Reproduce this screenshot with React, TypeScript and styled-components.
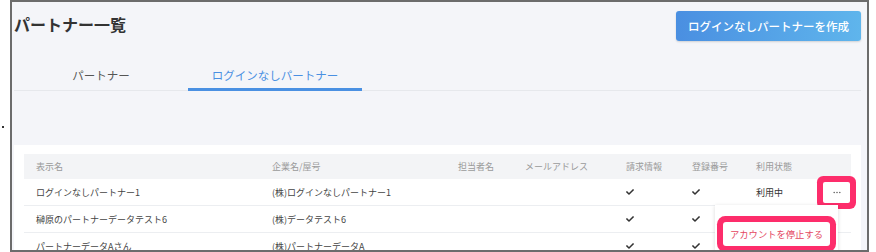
import React from 'react';
import styled, { createGlobalStyle } from 'styled-components';
import { FaCheck } from 'react-icons/fa';

const GlobalStyle = createGlobalStyle`
    html, body {
        margin: 0;
        padding: 0;
        background: #fff;
    }
    body {
        font-family: "Noto Sans CJK JP", "Noto Sans", sans-serif;
    }
`

type Row = {
    name: string;
    company: string;
    billing: boolean;
    reg: boolean;
    status?: string;
    menu?: boolean;
};

const rows: Row[] = [
    { name: 'ログインなしパートナー1', company: '(株)ログインなしパートナー1', billing: true, reg: true, status: '利用中', menu: true },
    { name: '榊原のパートナーデータテスト6', company: '(株)データテスト6', billing: true, reg: true },
    { name: 'パートナーデータAさん', company: '(株)パートナーデータA', billing: true, reg: true },
];

const headers = ['表示名', '企業名/屋号', '担当者名', 'メールアドレス', '請求情報', '登録番号', '利用状態', ''];

function Dots() {
    return (
        <svg width="8" height="3" viewBox="0 0 8 3">
            <circle cx="1.2" cy="1.5" r="0.8" fill="#666" />
            <circle cx="4" cy="1.5" r="0.8" fill="#666" />
            <circle cx="6.8" cy="1.5" r="0.8" fill="#666" />
        </svg>
    );
}

function App() {
    return (
        <Wrapper>
            <GlobalStyle />
            <Dot />
            <Frame>
                <Page>
                    <TopBar>
                        <Title>パートナー一覧</Title>
                        <CreateButton>ログインなしパートナーを作成</CreateButton>
                    </TopBar>
                    <TabBar>
                        <Tab>パートナー</Tab>
                        <Tab $active>ログインなしパートナー</Tab>
                    </TabBar>
                    <Panel>
                        <HeadRow>
                            {headers.map((h, i) => (
                                <HeadCell key={i}>{h}</HeadCell>
                            ))}
                        </HeadRow>
                        {rows.map((r, i) => (
                            <BodyRow key={i}>
                                <Cell>{r.name}</Cell>
                                <Cell>{r.company}</Cell>
                                <Cell />
                                <Cell />
                                <Cell>{r.billing && <FaCheck size={8} color="#333" />}</Cell>
                                <Cell>{r.reg && <FaCheck size={8} color="#333" />}</Cell>
                                <Cell $strong>{r.status}</Cell>
                                <ActionCell>
                                    {r.menu && (
                                        <MenuAnchor>
                                            <MoreButton><Dots /></MoreButton>
                                            <Dropdown>
                                                <MenuItem>アカウントを停止する</MenuItem>
                                            </Dropdown>
                                        </MenuAnchor>
                                    )}
                                </ActionCell>
                            </BodyRow>
                        ))}
                    </Panel>
                </Page>
            </Frame>
        </Wrapper>
    );
}

const pink = '#fd2d6b';
const cols = '236px 186px 67px 101px 66px 64px 62px 1fr';

const Wrapper = styled.div`
    display: flex;
    align-items: center;
    width: 876px;
    height: 252px;
    overflow: hidden;
`

const Dot = styled.div`
    width: 2px;
    height: 2px;
    background: #333;
    margin: 2px 6px 0 2px;
    flex-shrink: 0;
`

const Frame = styled.div`
    width: 859px;
    height: 252px;
    box-sizing: border-box;
    border: 2px solid #6c6c6c;
    background: #f4f5f9;
    overflow: hidden;
    flex-shrink: 0;
`

const Page = styled.div`
    padding: 9px 6px 0 2px;
`

const TopBar = styled.div`
    display: flex;
    justify-content: space-between;
    align-items: flex-start;
`

const Title = styled.h1`
    margin: 0;
    font-size: 16px;
    font-weight: 700;
    line-height: 26px;
    color: #333;
`

const CreateButton = styled.button`
    width: 185px;
    height: 30px;
    border: none;
    border-radius: 3px;
    background: linear-gradient(90deg, #4a8fe1, #5fb5ec);
    box-shadow: 0 1px 2px rgba(0, 0, 0, 0.15);
    color: #fff;
    font-family: inherit;
    font-size: 11.5px;
    font-weight: 500;
    padding: 0;
    cursor: pointer;
`

const TabBar = styled.div`
    display: flex;
    margin-top: 19px;
    border-bottom: 1px solid #e6e8ec;
`

const Tab = styled.div<{ $active?: boolean }>`
    width: 174px;
    height: 31px;
    box-sizing: border-box;
    padding-top: 2px;
    margin-bottom: -1px;
    display: flex;
    align-items: center;
    justify-content: center;
    font-size: 11.5px;
    color: ${p => (p.$active ? '#4a90e2' : '#555')};
    border-bottom: 3px solid ${p => (p.$active ? '#4a90e2' : 'transparent')};
`

const Panel = styled.div`
    margin-top: 54px;
    background: #fff;
    padding: 9px 10px 0;
    height: 120px;
`

const HeadRow = styled.div`
    display: grid;
    grid-template-columns: ${cols};
    height: 25px;
    align-items: center;
    background: #f3f4f6;
`

const HeadCell = styled.div`
    padding-left: 12px;
    font-size: 9px;
    color: #9a9a9a;
`

const BodyRow = styled.div`
    display: grid;
    grid-template-columns: ${cols};
    height: 27px;
    box-sizing: border-box;
    align-items: center;
    border-bottom: 1px solid #eceef1;
`

const Cell = styled.div<{ $strong?: boolean }>`
    padding-left: 12px;
    font-size: 9px;
    color: ${p => (p.$strong ? '#333' : '#444')};
    display: flex;
    align-items: center;
    white-space: nowrap;
`

const ActionCell = styled.div`
    display: flex;
    justify-content: flex-end;
    padding-right: 1px;
`

const MenuAnchor = styled.div`
    position: relative;
`

const MoreButton = styled.button`
    width: 27px;
    height: 21px;
    padding: 0;
    border: none;
    border-radius: 2px;
    background: #fff;
    display: flex;
    align-items: center;
    justify-content: center;
    box-shadow: 0 0 0 6px ${pink};
`

const Dropdown = styled.div`
    position: absolute;
    top: 23px;
    right: 12px;
    width: 123px;
    height: 70px;
    box-sizing: border-box;
    padding: 17px 8px 0;
    background: #fff;
    box-shadow: 0 1px 4px rgba(0, 0, 0, 0.15);
    z-index: 2;
`

const MenuItem = styled.div`
    height: 24px;
    display: flex;
    align-items: center;
    padding-left: 7px;
    border-radius: 3px;
    background: #fff;
    color: #e4475f;
    font-size: 9.3px;
    white-space: nowrap;
    box-shadow: 0 0 0 6px ${pink};
`

export default App;
